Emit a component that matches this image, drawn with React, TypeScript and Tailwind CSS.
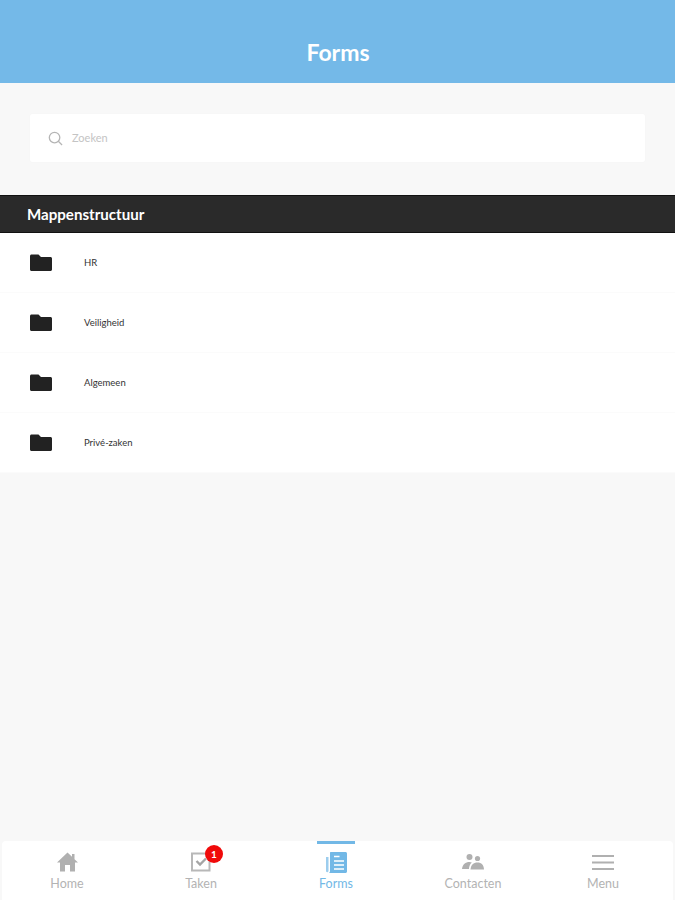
const font = "font-['Lato',sans-serif]";

function Folder() {
  return (
    <svg width="22" height="17" viewBox="0 0 22 17" className="shrink-0">
      <path d="M1.500 0.500H8.500L11 3H20.500C21.300 3 22 3.700 22 4.500V15.500C22 16.300 21.300 17 20.500 17H1.500C0.700 17 0 16.300 0 15.500V2C0 1.200 0.700 0.500 1.500 0.500Z" fill="#222222" />
    </svg>
  );
}

function Row({ label }: { label: string }) {
  return (
    <div className="flex h-[60px] items-center border-b border-[#fbfbfb] bg-white pl-[30px]">
      <Folder />
      <span className="ml-[32px] mt-[2px] text-[9.500px] text-[#333333]">{label}</span>
    </div>
  );
}

function Tab({ label, width, active, children }: { label: string; width: string; active?: boolean; children: React.ReactNode }) {
  return (
    <div className={`relative flex flex-col items-center pt-[10px] ${width} ${active ? "text-[#72b8e6]" : "text-[#b3b3b3]"}`}>
      {active && <div className="absolute top-0 h-[3px] w-[38px] bg-[#72b8e6]" />}
      <div className="relative flex h-[22px] items-center justify-center">{children}</div>
      <span className="mt-[3px] text-[12.500px] leading-[15px]">{label}</span>
    </div>
  );
}

export default function App() {
  return (
    <div className={`flex h-[900px] w-[675px] flex-col overflow-hidden bg-[#f8f8f8] ${font}`}>
      <header className="flex h-[83px] items-center justify-center bg-[#74b9e8] pl-[1px] pt-[21px]">
        <h1 className="text-[23px] font-bold text-white">Forms</h1>
      </header>

      <div className="mx-[30px] mt-[31px] flex h-[48px] items-center rounded-[2px] bg-white pl-[18px] shadow-[0_0_1px_#eeeeee]">
        <svg width="15" height="15" viewBox="0 0 16 16" fill="none" stroke="#b5b5b5" strokeWidth="1.400">
          <circle cx="7" cy="7" r="5.600" />
          <path d="M11 11L15 15" />
        </svg>
        <span className="ml-[9px] text-[11px] text-[#c4c4c4]">Zoeken</span>
      </div>

      <div className="mt-[33px] flex h-[38px] items-center border-y border-[#111111] bg-[#2a2a2a] pl-[27px]">
        <span className="text-[15.100px] font-bold text-white">Mappenstructuur</span>
      </div>

      <Row label="HR" />
      <Row label="Veiligheid" />
      <Row label="Algemeen" />
      <Row label="Privé-zaken" />

      <div className="flex-1" />

      <nav className="mx-[2px] flex h-[59px] rounded-t-[4px] bg-white">
        <Tab label="Home" width="w-[130px]">
          <svg width="21" height="20" viewBox="0 0 21 20" fill="#b0b0b0">
            <path d="M10.500 0.500L15 4.800V2H17.500V7.200L21 10.500H18V19.500H13V13H8V19.500H3V10.500H0Z" />
          </svg>
        </Tab>
        <Tab label="Taken" width="w-[138px]">
          <svg width="20" height="20" viewBox="0 0 20 20" fill="none" stroke="#b8b8b8">
            <rect x="1" y="1.500" width="17.500" height="17" strokeWidth="2" />
            <path d="M5.500 9L9 12.500L15 6.500" strokeWidth="2.400" stroke="#a5a5a5" />
          </svg>
          <span className="absolute left-[14px] top-[-6px] flex h-[18px] w-[18px] items-center justify-center rounded-full bg-[#f00a0a] text-[10px] font-bold text-white">1</span>
        </Tab>
        <Tab label="Forms" width="w-[132px]" active>
          <svg width="21" height="21" viewBox="0 0 21 21">
            <path d="M0 5H2.500V19C2.500 20 1.500 20.200 1.200 20.200C0.500 20.200 0 19.700 0 19Z" fill="#9ccdee" />
            <path d="M4.500 0H19.500C20.300 0 21 0.700 21 1.500V19.500C21 20.300 20.300 21 19.500 21H3C3.800 20.500 4 19.700 4 19V0.500Z" fill="#72b8e6" />
            <path d="M8 4.500H13.500M8 9H18M8 13H18M8 17H18" stroke="#ffffff" strokeWidth="1.500" />
          </svg>
        </Tab>
        <Tab label="Contacten" width="w-[142px]">
          <svg width="22" height="16" viewBox="0 0 22 16" fill="#b0b0b0">
            <circle cx="7.500" cy="3" r="3" />
            <circle cx="15.500" cy="4.500" r="2.600" />
            <path d="M0 15C0.500 10.500 3.500 8 7.500 8C8.500 8 9.200 8.200 9.800 8.500C8 10 7 12.500 7 15Z" />
            <path d="M8.500 15.500C8.800 11 11.500 8.500 15.500 8.500C19.500 8.500 21.700 11 22 15.500Z" />
          </svg>
        </Tab>
        <Tab label="Menu" width="w-[118px]">
          <svg width="22" height="15" viewBox="0 0 22 15" fill="#b0b0b0">
            <rect y="0" width="22" height="2" />
            <rect y="6.500" width="22" height="2" />
            <rect y="13" width="22" height="2" />
          </svg>
        </Tab>
      </nav>
    </div>
  );
}
